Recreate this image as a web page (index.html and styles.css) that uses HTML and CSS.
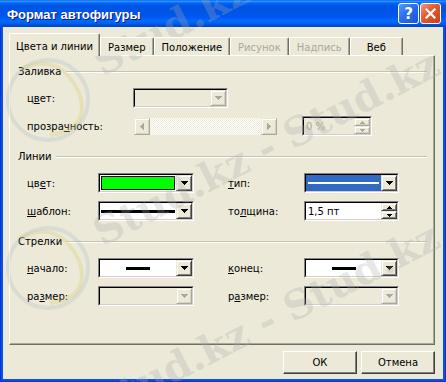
FILE: index.html
```html
<!DOCTYPE html>
<html lang="ru">
<head>
    <meta charset="UTF-8">
    <title>Формат автофигуры</title>
    <link rel="stylesheet" href="styles.css">
</head>
<body>
    <div class="window">
        <div class="titlebar">
            <span class="title">Формат автофигуры</span>
            <div class="title-buttons">
                <span class="tbtn help">?</span>
                <span class="tbtn close">
                    <svg width="11" height="11" viewBox="0 0 11 11"><path d="M1.5 1.5l8 8M9.5 1.5l-8 8" stroke="#fff" stroke-width="2.2" stroke-linecap="square"/></svg>
                </span>
            </div>
        </div>

        <div class="client">
            <div class="tabs">
                <div class="tab active">Цвета и линии</div>
                <div class="tab">Размер</div>
                <div class="tab">Положение</div>
                <div class="tab disabled">Рисунок</div>
                <div class="tab disabled">Надпись</div>
                <div class="tab tab-web">Веб</div>
            </div>

            <div class="panel">
                <!-- Заливка -->
                <div class="group">
                    <div class="group-title"><span>Заливка</span></div>
                    <div class="row first">
                        <span class="label fill-label">ц<u>в</u>ет:</span>
                        <div class="combo w95 disabled">
                            <div class="combo-in">
                                <div class="field"></div>
                                <span class="drop"><svg width="7" height="4" shape-rendering="crispEdges"><path d="M0 0h7v1h-1v1h-1v1h-1v1h-1v-1h-1v-1h-1v-1h-1z" fill="#aca899"/></svg></span>
                            </div>
                        </div>
                    </div>
                    <div class="row">
                        <span class="label fill-label">прозра<u>ч</u>ность:</span>
                        <div class="scroll">
                            <span class="sbtn"><svg width="4" height="7" shape-rendering="crispEdges"><path d="M3 0h1v7h-1v-1h-1v-1h-1v-1h-1v-1h1v-1h1v-1h1z" fill="#aca899"/></svg></span>
                            <span class="track"></span>
                            <span class="sbtn"><svg width="4" height="7" shape-rendering="crispEdges"><path d="M0 0h1v1h1v1h1v1h1v1h-1v1h-1v1h-1v1h-1z" fill="#aca899"/></svg></span>
                        </div>
                        <div class="spin w70 disabled">
                            <div class="spin-in">
                                <span class="value">0 %</span>
                                <span class="spin-btns">
                                    <span class="sp"><svg width="5" height="3" shape-rendering="crispEdges"><path d="M2 0h1v1h1v1h1v1h-5v-1h1v-1h1z" fill="#aca899"/></svg></span>
                                    <span class="sp"><svg width="5" height="3" shape-rendering="crispEdges"><path d="M0 0h5v1h-1v1h-1v1h-1v-1h-1v-1h-1z" fill="#aca899"/></svg></span>
                                </span>
                            </div>
                        </div>
                    </div>
                </div>

                <!-- Линии -->
                <div class="group">
                    <div class="group-title"><span>Линии</span></div>
                    <div class="row first">
                        <span class="label left-label">цв<u>е</u>т:</span>
                        <div class="combo w96">
                            <div class="combo-in">
                                <div class="field"><span class="swatch"></span></div>
                                <span class="drop"><svg width="7" height="4" shape-rendering="crispEdges"><path d="M0 0h7v1h-1v1h-1v1h-1v1h-1v-1h-1v-1h-1v-1h-1z" fill="#000"/></svg></span>
                            </div>
                        </div>
                        <span class="label right-label"><u>т</u>ип:</span>
                        <div class="combo w95">
                            <div class="combo-in">
                                <div class="field selected"><span class="line-thin"></span></div>
                                <span class="drop"><svg width="7" height="4" shape-rendering="crispEdges"><path d="M0 0h7v1h-1v1h-1v1h-1v1h-1v-1h-1v-1h-1v-1h-1z" fill="#000"/></svg></span>
                            </div>
                        </div>
                    </div>
                    <div class="row">
                        <span class="label left-label"><u>ш</u>аблон:</span>
                        <div class="combo w96">
                            <div class="combo-in">
                                <div class="field"><span class="line-full"></span></div>
                                <span class="drop"><svg width="7" height="4" shape-rendering="crispEdges"><path d="M0 0h7v1h-1v1h-1v1h-1v1h-1v-1h-1v-1h-1v-1h-1z" fill="#000"/></svg></span>
                            </div>
                        </div>
                        <span class="label right-label">то<u>л</u>щина:</span>
                        <div class="spin w95">
                            <div class="spin-in">
                                <span class="value">1,5 пт</span>
                                <span class="spin-btns">
                                    <span class="sp"><svg width="5" height="3" shape-rendering="crispEdges"><path d="M2 0h1v1h1v1h1v1h-5v-1h1v-1h1z" fill="#000"/></svg></span>
                                    <span class="sp"><svg width="5" height="3" shape-rendering="crispEdges"><path d="M0 0h5v1h-1v1h-1v1h-1v-1h-1v-1h-1z" fill="#000"/></svg></span>
                                </span>
                            </div>
                        </div>
                    </div>
                </div>

                <!-- Стрелки -->
                <div class="group">
                    <div class="group-title"><span>Стрелки</span></div>
                    <div class="row first">
                        <span class="label left-label"><u>н</u>ачало:</span>
                        <div class="combo w96">
                            <div class="combo-in">
                                <div class="field center"><span class="line-short"></span></div>
                                <span class="drop"><svg width="7" height="4" shape-rendering="crispEdges"><path d="M0 0h7v1h-1v1h-1v1h-1v1h-1v-1h-1v-1h-1v-1h-1z" fill="#000"/></svg></span>
                            </div>
                        </div>
                        <span class="label right-label"><u>к</u>онец:</span>
                        <div class="combo w95">
                            <div class="combo-in">
                                <div class="field center"><span class="line-short"></span></div>
                                <span class="drop"><svg width="7" height="4" shape-rendering="crispEdges"><path d="M0 0h7v1h-1v1h-1v1h-1v1h-1v-1h-1v-1h-1v-1h-1z" fill="#000"/></svg></span>
                            </div>
                        </div>
                    </div>
                    <div class="row">
                        <span class="label left-label">ра<u>з</u>мер:</span>
                        <div class="combo w96 disabled">
                            <div class="combo-in">
                                <div class="field"></div>
                                <span class="drop"><svg width="7" height="4" shape-rendering="crispEdges"><path d="M0 0h7v1h-1v1h-1v1h-1v1h-1v-1h-1v-1h-1v-1h-1z" fill="#aca899"/></svg></span>
                            </div>
                        </div>
                        <span class="label right-label">р<u>а</u>змер:</span>
                        <div class="combo w95 disabled">
                            <div class="combo-in">
                                <div class="field"></div>
                                <span class="drop"><svg width="7" height="4" shape-rendering="crispEdges"><path d="M0 0h7v1h-1v1h-1v1h-1v1h-1v-1h-1v-1h-1v-1h-1z" fill="#aca899"/></svg></span>
                            </div>
                        </div>
                    </div>
                </div>
            </div>

            <div class="actions">
                <button type="button">ОК</button>
                <button type="button">Отмена</button>
            </div>
        </div>

        <!-- site watermark laid over the screenshot -->
        <div class="watermark">
            <svg class="wm-logos" width="446" height="382">
                <g fill="none" stroke-width="4">
                    <circle cx="48" cy="100" r="40" stroke="rgba(150,175,195,0.22)"/>
                    <path d="M20 70 Q60 50 80 95 Q90 130 50 135" stroke="rgba(215,205,110,0.3)"/>
                    <circle cx="48" cy="268" r="40" stroke="rgba(150,175,195,0.22)"/>
                    <path d="M20 238 Q60 218 80 263 Q90 298 50 303" stroke="rgba(215,205,110,0.3)"/>
                </g>
            </svg>
            <div class="wm-line wm-1">Stud.kz - Stud.kz - Stud.kz</div>
            <div class="wm-line wm-2">Stud.kz - Stud.kz - Stud.kz</div>
            <div class="wm-line wm-3">Stud.kz - Stud.kz - Stud.kz</div>
        </div>
    </div>
</body>
</html>
```

FILE: styles.css
```css
body {
    margin: 0;
    font-family: "DejaVu Sans", sans-serif;
    font-size: 10px;
    color: #000;
}

.window {
    position: relative;
    width: 446px;
    height: 382px;
    display: flex;
    flex-direction: column;
    background: #0553e4;
    box-shadow: inset 1px 0 #0831d9, inset -1px 0 #0831d9, inset 0 -1px #0831d9;
    overflow: hidden;
}

/* title bar */
.titlebar {
    height: 27px;
    flex: none;
    display: flex;
    align-items: center;
    justify-content: space-between;
    padding: 0 5px 0 7px;
    background: linear-gradient(to bottom, #0058ee 0%, #3593ff 4%, #288eff 6%, #127dff 8%, #036ffc 10%, #0262ee 14%, #0057e5 20%, #0054e3 24%, #0055eb 56%, #005bf5 66%, #026afe 76%, #0062ef 86%, #0052d6 92%, #0046c0 100%);
}

.title {
    color: #fff;
    font-family: "Liberation Sans", sans-serif;
    font-weight: bold;
    font-size: 13px;
    text-shadow: 1px 1px #0a1883;
    margin-top: 1px;
}

.title-buttons {
    display: flex;
    gap: 1px;
}

.tbtn {
    width: 21px;
    height: 21px;
    box-sizing: border-box;
    border: 1px solid #fff;
    border-radius: 3px;
    display: flex;
    align-items: center;
    justify-content: center;
    color: #fff;
    font-weight: bold;
    font-size: 15px;
}

.help {
    background: linear-gradient(135deg, #5a9bfc 0%, #2a6cf0 45%, #1a55d6 100%);
}

.close {
    background: linear-gradient(135deg, #f09a78 0%, #e45d33 40%, #c8401a 100%);
}

/* client area */
.client {
    flex: 1;
    margin: 0 3px 3px;
    padding: 6px 8px 0 6px;
    background: #ece9d8;
}

.tabs {
    display: flex;
    align-items: flex-end;
    height: 23px;
    margin-bottom: -1px;
    position: relative;
    z-index: 1;
}

.tab {
    height: 18px;
    margin-bottom: 1px;
    padding: 1px 7px 0;
    box-sizing: border-box;
    display: flex;
    align-items: center;
    justify-content: center;
    border-top: 1px solid #fff;
    border-left: 1px solid #fff;
    border-right: 1px solid #716f64;
    border-radius: 2px 2px 0 0;
    box-shadow: inset -1px 0 #aca899;
    background: #ece9d8;
    white-space: nowrap;
}

.tab.active {
    height: 23px;
    margin-bottom: 0;
    padding: 3px 6px 0;
}

.tab.disabled {
    color: #aca899;
}

.tab-web {
    width: 53px;
}

.panel {
    height: 290px;
    box-sizing: border-box;
    border-top: 1px solid #fff;
    border-left: 1px solid #fff;
    border-right: 1px solid #716f64;
    border-bottom: 1px solid #716f64;
    box-shadow: inset -1px -1px #aca899;
    padding-top: 8px;
}

/* groups */
.group + .group {
    margin-top: 13px;
}

.group-title {
    display: flex;
    align-items: center;
    gap: 4px;
    height: 14px;
    margin: 0 7px 0 8px;
}

.group-title::after {
    content: "";
    flex: 1;
    border-top: 1px solid #c9c2ac;
    border-bottom: 1px solid #fff;
    margin-top: 1px;
}

.row {
    display: flex;
    align-items: center;
    height: 20px;
    margin-top: 8px;
    padding-left: 17px;
}

.row.first {
    margin-top: 10px;
}

.label {
    flex: none;
    white-space: nowrap;
    margin-top: 1px;
}

.fill-label {
    width: 106px;
}

.left-label {
    width: 71px;
}

.right-label {
    width: 76px;
    margin-left: 34px;
}

/* combo box */
.combo,
.spin {
    height: 20px;
    box-sizing: border-box;
    display: flex;
    border: 1px solid;
    border-color: #848284 #fff #fff #848284;
}

.w95 { width: 95px; }
.w96 { width: 96px; }
.w70 { width: 70px; }

.combo-in,
.spin-in {
    flex: 1;
    display: flex;
    border: 1px solid;
    border-color: #000 #d4d0c8 #d4d0c8 #000;
    background: #fff;
}

.field {
    flex: 1;
    display: flex;
    align-items: center;
    padding: 1px;
}

.field.center {
    justify-content: center;
}

.field.selected {
    background: #316ac5;
    padding: 0 2px;
}

.swatch {
    flex: 1;
    align-self: stretch;
    border: 1px solid #000;
    background: #00ff00;
}

.line-thin {
    flex: 1;
    height: 2px;
    background: #fff;
}

.line-full {
    flex: 1;
    height: 3px;
    background: #000;
}

.line-short {
    width: 24px;
    height: 3px;
    background: #000;
}

.drop {
    width: 16px;
    flex: none;
    box-sizing: border-box;
    display: flex;
    align-items: center;
    justify-content: center;
    background: #ece9d8;
    border: 1px solid;
    border-color: #ece9d8 #404040 #404040 #ece9d8;
    box-shadow: inset 1px 1px #fff, inset -1px -1px #808080;
}

.combo.disabled .combo-in {
    background: #ece9d8;
}

.combo.disabled .drop {
    border-color: #ece9d8 #aca899 #aca899 #ece9d8;
    box-shadow: inset 1px 1px #fff, inset -1px -1px #d4d0c8;
}

/* spinner */
.value {
    flex: 1;
    padding-left: 2px;
    display: flex;
    align-items: center;
}

.spin-btns {
    width: 16px;
    display: flex;
    flex-direction: column;
}

.sp {
    flex: 1;
    display: flex;
    align-items: center;
    justify-content: center;
    box-sizing: border-box;
    background: #ece9d8;
    border: 1px solid;
    border-color: #ece9d8 #404040 #404040 #ece9d8;
    box-shadow: inset 1px 1px #fff, inset -1px -1px #808080;
}

.spin.disabled {
    margin-left: 25px;
}

.spin.disabled .spin-in {
    background: #ece9d8;
    color: #aca899;
}

.spin.disabled .sp {
    border-color: #ece9d8 #aca899 #aca899 #ece9d8;
    box-shadow: inset 1px 1px #fff, inset -1px -1px #d4d0c8;
}

/* scroll bar */
.scroll {
    width: 143px;
    height: 17px;
    display: flex;
    margin-left: 1px;
}

.sbtn {
    width: 16px;
    flex: none;
    box-sizing: border-box;
    display: flex;
    align-items: center;
    justify-content: center;
    background: #ece9d8;
    border: 1px solid;
    border-color: #ece9d8 #aca899 #aca899 #ece9d8;
    box-shadow: inset 1px 1px #fff, inset -1px -1px #d4d0c8;
}

.track {
    flex: 1;
    background: repeating-conic-gradient(#fff 0 25%, #ece9d8 0 50%) 0 0 / 2px 2px;
}

/* buttons */
.actions {
    display: flex;
    justify-content: flex-end;
    gap: 4px;
    margin-top: 6px;
}

button {
    width: 74px;
    height: 23px;
    font-family: "DejaVu Sans", sans-serif;
    font-size: 10px;
    color: #000;
    background: #ece9d8;
    border: 1px solid;
    border-color: #fff #404040 #404040 #fff;
    box-shadow: inset -1px -1px #808080;
    padding: 0;
}

/* watermark over everything */
.watermark {
    position: absolute;
    inset: 0;
    pointer-events: none;
    overflow: hidden;
}

.wm-logos {
    position: absolute;
    left: 0;
    top: 0;
}

.wm-line {
    position: absolute;
    left: 105px;
    height: 40px;
    line-height: 40px;
    transform: rotate(-27deg);
    transform-origin: 0 100%;
    font-family: "DejaVu Serif", serif;
    font-weight: bold;
    font-size: 40px;
    color: rgba(170, 170, 170, 0.28);
    white-space: nowrap;
}

.wm-1 { top: 42px; }
.wm-2 { top: 212px; }
.wm-3 { top: 385px; }
```
